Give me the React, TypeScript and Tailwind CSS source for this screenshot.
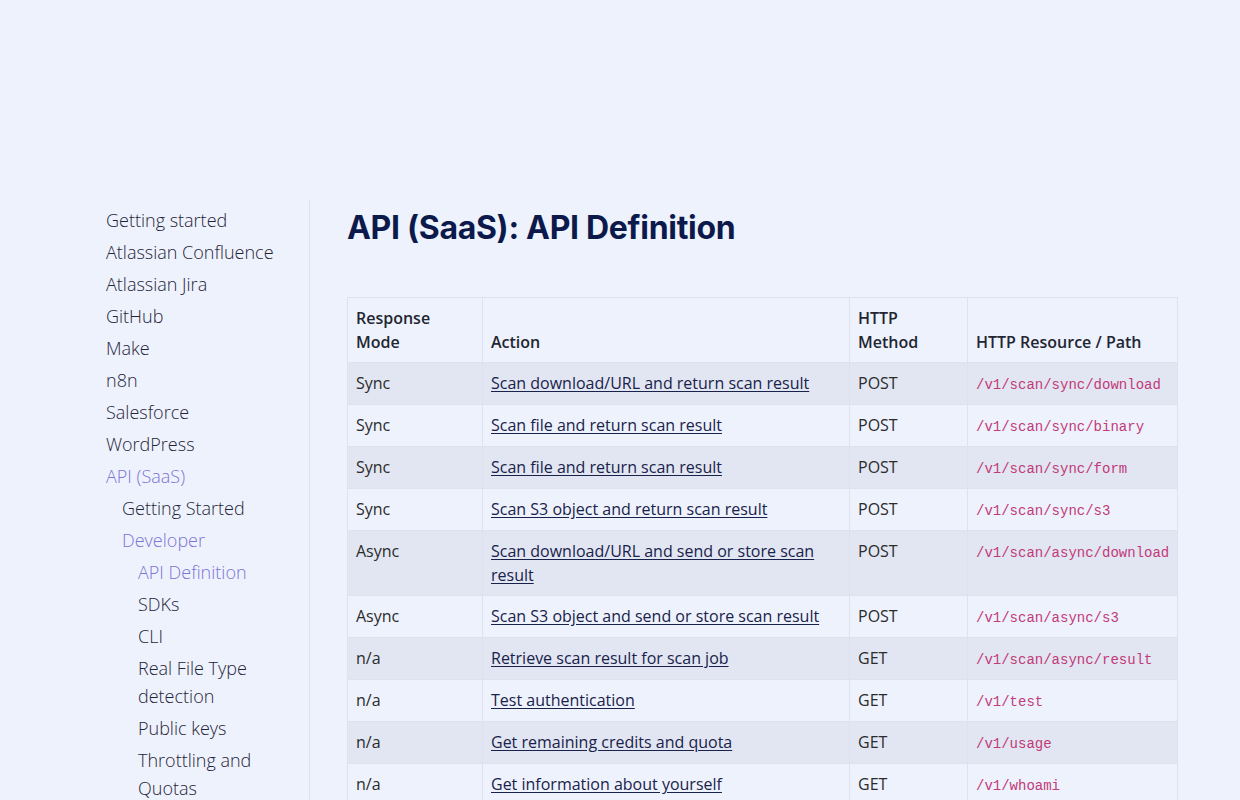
import React from "react";

type NavItem = { label: string; level: number; active?: boolean };

const nav: NavItem[] = [
  { label: "Getting started", level: 0 },
  { label: "Atlassian Confluence", level: 0 },
  { label: "Atlassian Jira", level: 0 },
  { label: "GitHub", level: 0 },
  { label: "Make", level: 0 },
  { label: "n8n", level: 0 },
  { label: "Salesforce", level: 0 },
  { label: "WordPress", level: 0 },
  { label: "API (SaaS)", level: 0, active: true },
  { label: "Getting Started", level: 1 },
  { label: "Developer", level: 1, active: true },
  { label: "API Definition", level: 2, active: true },
  { label: "SDKs", level: 2 },
  { label: "CLI", level: 2 },
  { label: "Real File Type detection", level: 2 },
  { label: "Public keys", level: 2 },
  { label: "Throttling and Quotas", level: 2 },
];

const rows = [
  ["Sync", "Scan download/URL and return scan result", "POST", "/v1/scan/sync/download"],
  ["Sync", "Scan file and return scan result", "POST", "/v1/scan/sync/binary"],
  ["Sync", "Scan file and return scan result", "POST", "/v1/scan/sync/form"],
  ["Sync", "Scan S3 object and return scan result", "POST", "/v1/scan/sync/s3"],
  ["Async", "Scan download/URL and send or store scan result", "POST", "/v1/scan/async/download"],
  ["Async", "Scan S3 object and send or store scan result", "POST", "/v1/scan/async/s3"],
  ["n/a", "Retrieve scan result for scan job", "GET", "/v1/scan/async/result"],
  ["n/a", "Test authentication", "GET", "/v1/test"],
  ["n/a", "Get remaining credits and quota", "GET", "/v1/usage"],
  ["n/a", "Get information about yourself", "GET", "/v1/whoami"],
];

export default function App() {
  return (
    <div
      className="min-h-[800px] w-full bg-[#eef2fd] overflow-hidden"
      style={{ fontFamily: "'Open Sans', 'Noto Sans', sans-serif" }}
    >
      <div className="flex pt-[200px] pl-[106px]">
        <aside className="w-[204px] shrink-0 border-r border-[#dde2ee] pr-5 min-h-[600px]">
          <ul className="pt-[2px]">
            {nav.map((n, i) => (
              <li
                key={i}
                className={
                  "mt-1 text-[18px] leading-[28px] font-light " +
                  (n.level === 1 ? "pl-4 " : n.level === 2 ? "pl-8 " : "") +
                  (n.active ? "text-[#7c74d6]" : "text-[#1f2438]")
                }
              >
                {n.label}
              </li>
            ))}
          </ul>
        </aside>
        <main className="pl-[37px] w-[868px]">
          <h1
            className="text-[32px] leading-[40px] font-bold text-[#0c1a4b] pt-[8px] tracking-[-0.3px]"
            style={{ fontFamily: "Inter, 'Noto Sans', sans-serif" }}
          >
            API (SaaS): API Definition
          </h1>
          <table className="mt-[49px] w-[830px] border-collapse text-[16px] leading-[24px] text-[#2b2b2b] table-fixed">
            <colgroup>
              <col className="w-[135px]" />
              <col className="w-[367px]" />
              <col className="w-[118px]" />
              <col className="w-[210px]" />
            </colgroup>
            <thead>
              <tr>
                {["Response Mode", "Action", "HTTP Method", "HTTP Resource / Path"].map((h) => (
                  <th
                    key={h}
                    className="border border-[#dde2ee] px-2 pt-2 pb-[8px] text-left align-bottom font-semibold text-[#222631]"
                  >
                    {h}
                  </th>
                ))}
              </tr>
            </thead>
            <tbody>
              {rows.map((r, i) => {
                const pad = i === 4 ? "pt-2 pb-2" : "pt-2 pb-[9px]";
                return (
                  <tr key={i} className={i % 2 === 0 ? "bg-[#e1e6f2]" : "bg-[#eef2fd]"}>
                    <td className={"border border-[#dde2ee] px-2 align-top " + pad}>{r[0]}</td>
                    <td className={"border border-[#dde2ee] px-2 align-top " + pad}>
                      <a className="underline text-[#19224a] underline-offset-2">{r[1]}</a>
                    </td>
                    <td className={"border border-[#dde2ee] px-2 align-top " + pad}>{r[2]}</td>
                    <td className={"border border-[#dde2ee] px-2 align-top " + pad}>
                      <code
                        className="text-[14px] leading-none text-[#c23a78] whitespace-nowrap"
                        style={{ fontFamily: "'Liberation Mono', monospace" }}
                      >
                        {r[3]}
                      </code>
                    </td>
                  </tr>
                );
              })}
            </tbody>
          </table>
        </main>
      </div>
    </div>
  );
}
